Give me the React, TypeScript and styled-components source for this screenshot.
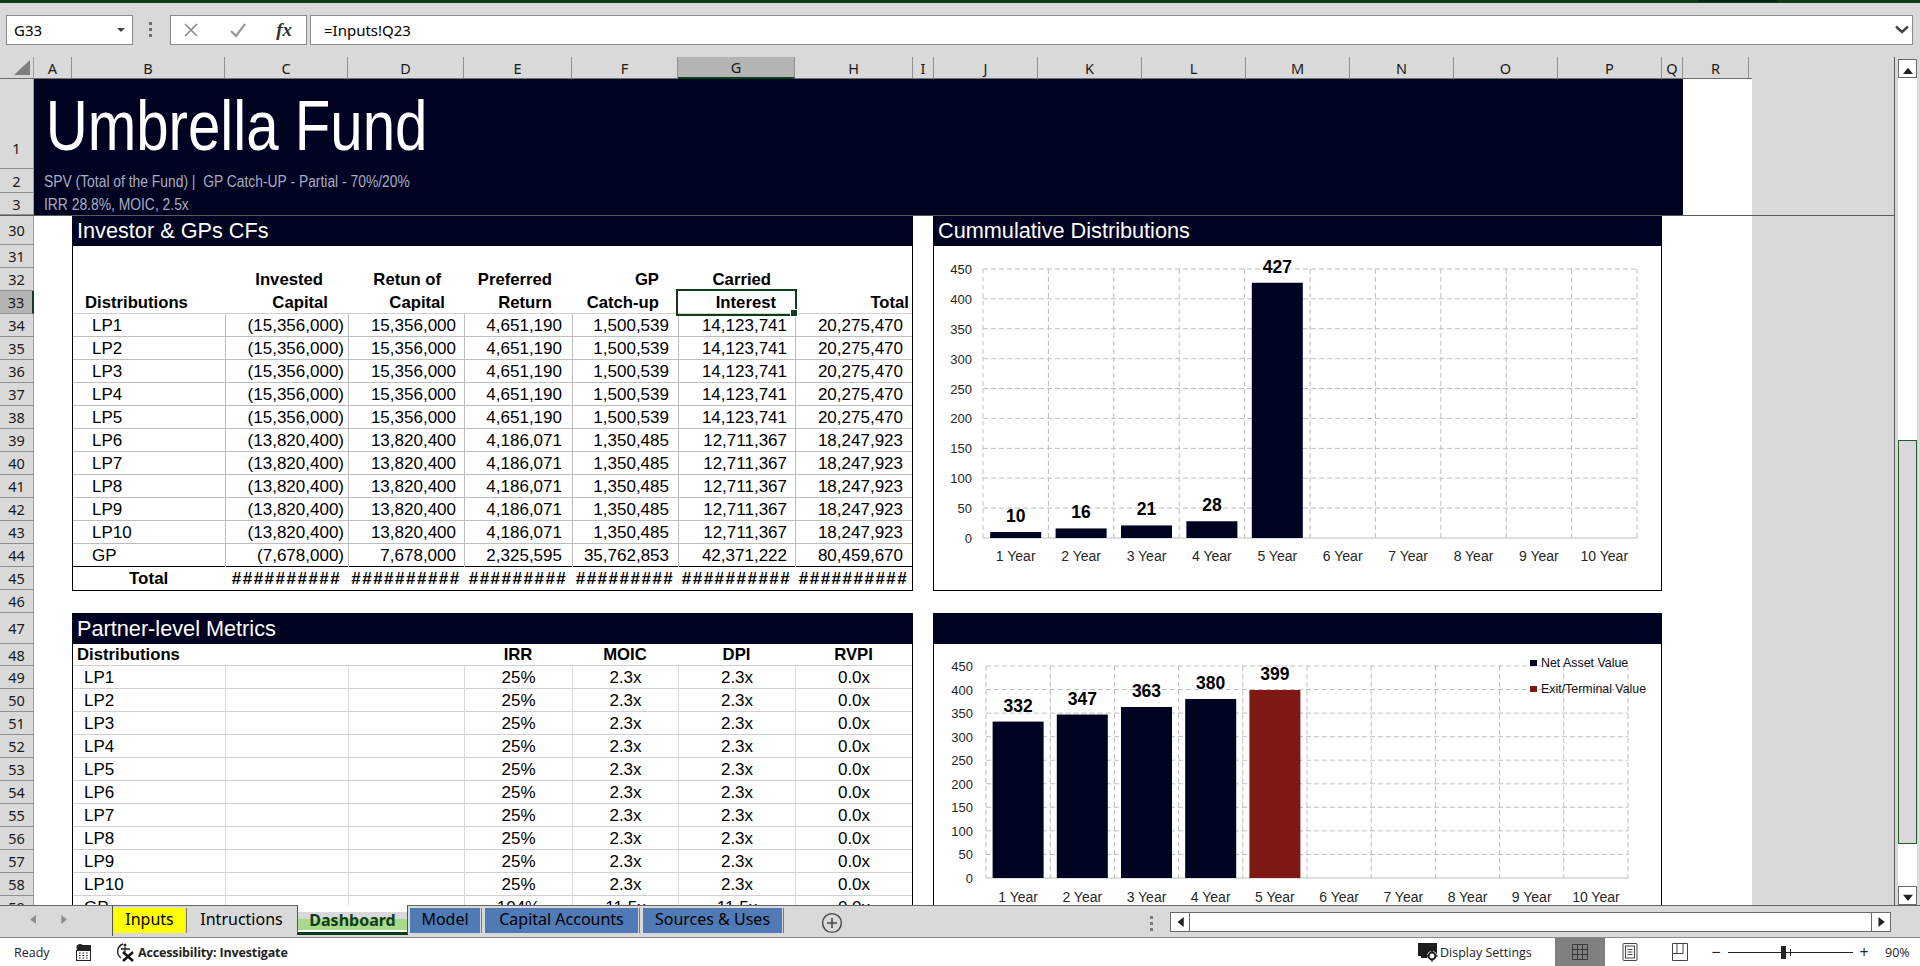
import React from "react";
import styled, { createGlobalStyle } from "styled-components";

const NAVY = "#000222";
const RED = "#7f1715";
const GREEN = "#0f3d1a";
const CHROME = "#d9d9d9";
const SELECTED = "#b4b4b4";

const GlobalStyle = createGlobalStyle`
  html, body {
    margin: 0;
    padding: 0;
    width: 1920px;
    height: 966px;
    overflow: hidden;
    background: ${CHROME};
  }

  * {
    box-sizing: border-box;
  }
`;

const columns = [
  { name: "A", width: 38 },
  { name: "B", width: 153 },
  { name: "C", width: 123 },
  { name: "D", width: 116 },
  { name: "E", width: 108 },
  { name: "F", width: 106 },
  { name: "G", width: 117 },
  { name: "H", width: 118 },
  { name: "I", width: 21 },
  { name: "J", width: 104 },
  { name: "K", width: 104 },
  { name: "L", width: 104 },
  { name: "M", width: 104 },
  { name: "N", width: 104 },
  { name: "O", width: 104 },
  { name: "P", width: 104 },
  { name: "Q", width: 21 },
  { name: "R", width: 66 },
];

const scrollRows = [
  [30, 29],
  [31, 23],
  [32, 23],
  [33, 23],
  ...Array.from({ length: 12 }, (_, i) => [34 + i, 23]),
  [46, 23],
  [47, 31],
  [48, 22],
  ...Array.from({ length: 11 }, (_, i) => [49 + i, 23]),
];

const big = ["(15,356,000)", "15,356,000", "4,651,190", "1,500,539", "14,123,741", "20,275,470"];
const small = ["(13,820,400)", "13,820,400", "4,186,071", "1,350,485", "12,711,367", "18,247,923"];

const flows = [
  { name: "LP1", values: big },
  { name: "LP2", values: big },
  { name: "LP3", values: big },
  { name: "LP4", values: big },
  { name: "LP5", values: big },
  { name: "LP6", values: small },
  { name: "LP7", values: small },
  { name: "LP8", values: small },
  { name: "LP9", values: small },
  { name: "LP10", values: small },
  { name: "GP", values: ["(7,678,000)", "7,678,000", "2,325,595", "35,762,853", "42,371,222", "80,459,670"] },
];

const numberPads = [4, 8, 10, 9, 8, 9];
const hashes = ["##########", "##########", "#########", "#########", "##########", "##########"];

const metrics = [
  ...["LP1", "LP2", "LP3", "LP4", "LP5", "LP6", "LP7", "LP8", "LP9", "LP10"].map((name) => ({
    name,
    values: ["25%", "2.3x", "2.3x", "0.0x"],
  })),
  { name: "GP", values: ["104%", "11.5x", "11.5x", "0.0x"] },
];

const years = ["1 Year", "2 Year", "3 Year", "4 Year", "5 Year", "6 Year", "7 Year", "8 Year", "9 Year", "10 Year"];
const ticks = [0, 50, 100, 150, 200, 250, 300, 350, 400, 450];

function Triangle({ dir, size = 8, color = "#222" }: { dir: "up" | "down" | "left" | "right"; size?: number; color?: string }) {
  const points = {
    up: "0,8 8,8 4,3",
    down: "0,3 8,3 4,8",
    left: "7,0 7,8 2,4",
    right: "2,0 2,8 7,4",
  }[dir];
  return (
    <svg width={size} height={size} viewBox="0 0 8 8">
      <polygon points={points} fill={color} />
    </svg>
  );
}

interface BarDatum {
  value: number;
  color: string;
}

interface ChartProps {
  width: number;
  height: number;
  left: number;
  right: number;
  top: number;
  bottom: number;
  axisX: number;
  labelY: number;
  bars: BarDatum[];
  children?: React.ReactNode;
}

function BarChart({ width, height, left, right, top, bottom, axisX, labelY, bars, children }: ChartProps) {
  const step = (right - left) / 10;
  const scale = (bottom - top) / 450;
  const barWidth = 51;

  return (
    <svg width={width} height={height} viewBox={`0 0 ${width} ${height}`}>
      {ticks.map((tick) => (
        <GridLine
          key={tick}
          x1={left}
          x2={right}
          y1={bottom - tick * scale}
          y2={bottom - tick * scale}
          strokeDasharray={tick === 0 ? undefined : "5 3"}
        />
      ))}
      {years.concat("").map((_, i) => (
        <GridLine key={i} x1={left + i * step} x2={left + i * step} y1={top} y2={bottom} strokeDasharray="5 3" />
      ))}
      {ticks.map((tick) => (
        <AxisText key={tick} x={axisX} y={bottom - tick * scale + 5} textAnchor="end">
          {tick}
        </AxisText>
      ))}
      {bars.map((bar, i) => {
        const barTop = bottom - bar.value * scale;
        const x = left + i * step + (step - barWidth) / 2;
        return (
          <g key={i}>
            <rect x={x} y={barTop} width={barWidth} height={bar.value * scale} fill={bar.color} />
            <ValueText x={x + barWidth / 2} y={barTop - 10} textAnchor="middle">
              {bar.value}
            </ValueText>
          </g>
        );
      })}
      {years.map((year, i) => (
        <YearText key={year} x={left + i * step + step / 2} y={labelY} textAnchor="middle">
          {year}
        </YearText>
      ))}
      {children}
    </svg>
  );
}

function App() {
  return (
    <Page>
      <GlobalStyle />
      <TitleStrip>
        <TitleStripTab />
      </TitleStrip>

      <FormulaBar>
        <NameBox>
          G33
          <svg width="8" height="8" viewBox="0 0 8 8">
            <polygon points="0,2 8,2 4,6" fill="#444" />
          </svg>
        </NameBox>
        <GripDots>
          <i />
          <i />
          <i />
        </GripDots>
        <FormulaButtons>
          <svg width="18" height="18" viewBox="0 0 18 18">
            <path d="M3 3 L15 15 M15 3 L3 15" stroke="#8a8a8a" strokeWidth="1.6" fill="none" />
          </svg>
          <svg width="18" height="18" viewBox="0 0 18 18">
            <path d="M2 10 L7 15 L16 3" stroke="#9a9a9a" strokeWidth="2.2" fill="none" />
          </svg>
          <FxLabel>fx</FxLabel>
        </FormulaButtons>
        <FormulaInput>
          =Inputs!Q23
          <svg width="14" height="10" viewBox="0 0 14 10">
            <path d="M1 1.5 L7 7 L13 1.5" stroke="#444" strokeWidth="2.4" fill="none" />
          </svg>
        </FormulaInput>
      </FormulaBar>

      <Workspace>
        <GridArea>
          <ColumnBar>
            <Corner>
              <svg width="16" height="15" viewBox="0 0 16 15">
                <polygon points="16,0 16,15 0,15" fill="#7f7f7f" />
              </svg>
            </Corner>
            {columns.map((col) => (
              <ColumnHead key={col.name} $width={col.width} $selected={col.name === "G"}>
                {col.name}
              </ColumnHead>
            ))}
            <ColumnEnd />
          </ColumnBar>

          <FrozenPane>
            <RowHeads>
              <RowHead $height={90} $bottom>1</RowHead>
              <RowHead $height={24}>2</RowHead>
              <RowHead $height={22}>3</RowHead>
            </RowHeads>
            <Banner>
              <BannerTitle>Umbrella Fund</BannerTitle>
              <BannerLine $height={24}>SPV (Total of the Fund) |&nbsp; GP Catch-UP - Partial - 70%/20%</BannerLine>
              <BannerLine $height={22}>IRR 28.8%, MOIC, 2.5x</BannerLine>
            </Banner>
            <BlankCell />
          </FrozenPane>

          <ScrollPane>
            <RowHeads>
              {scrollRows.map(([row, height]) => (
                <RowHead key={row} $height={height} $selected={row === 33}>
                  {row}
                </RowHead>
              ))}
            </RowHeads>
            <SheetBody>
              <LeftColumn>
                <Panel>
                  <PanelTitle $height={30}>Investor &amp; GPs CFs</PanelTitle>
                  <BlankRow />
                  <HeadRow>
                    <Cell />
                    <HeadCell $pad={25}>Invested</HeadCell>
                    <HeadCell $pad={23}>Retun of</HeadCell>
                    <HeadCell $pad={20}>Preferred</HeadCell>
                    <HeadCell $pad={19}>GP</HeadCell>
                    <HeadCell $pad={24}>Carried</HeadCell>
                    <HeadCell />
                  </HeadRow>
                  <HeadRow $ruled>
                    <HeadCell $left $pad={12}>Distributions</HeadCell>
                    <HeadCell $pad={20}>Capital</HeadCell>
                    <HeadCell $pad={19}>Capital</HeadCell>
                    <HeadCell $pad={20}>Return</HeadCell>
                    <HeadCell $pad={19}>Catch-up</HeadCell>
                    <HeadCell $pad={19}>
                      Interest
                      <CellCursor />
                    </HeadCell>
                    <HeadCell $pad={3}>Total</HeadCell>
                  </HeadRow>
                  {flows.map((flow) => (
                    <DataRow key={flow.name}>
                      <NameCell $indent={19}>{flow.name}</NameCell>
                      {flow.values.map((value, i) => (
                        <NumberCell key={i} $pad={numberPads[i]}>
                          {value}
                        </NumberCell>
                      ))}
                    </DataRow>
                  ))}
                  <TotalRow>
                    <TotalLabel>Total</TotalLabel>
                    {hashes.map((hash, i) => (
                      <HashCell key={i}>{hash}</HashCell>
                    ))}
                  </TotalRow>
                </Panel>

                <OpenPanel>
                  <PanelTitle $height={31}>Partner-level Metrics</PanelTitle>
                  <MetricHead>
                    <HeadCell $left $pad={4}>Distributions</HeadCell>
                    <Cell />
                    <Cell />
                    <MetricTitle>IRR</MetricTitle>
                    <MetricTitle>MOIC</MetricTitle>
                    <MetricTitle>DPI</MetricTitle>
                    <MetricTitle>RVPI</MetricTitle>
                  </MetricHead>
                  {metrics.map((metric) => (
                    <MetricRow key={metric.name}>
                      <NameCell $indent={11}>{metric.name}</NameCell>
                      <MetricCell />
                      <MetricCell />
                      {metric.values.map((value, i) => (
                        <MetricCell key={i}>{value}</MetricCell>
                      ))}
                    </MetricRow>
                  ))}
                </OpenPanel>
              </LeftColumn>

              <RightColumn>
                <Panel>
                  <PanelTitle $height={30}>Cummulative Distributions</PanelTitle>
                  <BarChart
                    width={727}
                    height={344}
                    left={49}
                    right={703}
                    top={23}
                    bottom={292}
                    axisX={38}
                    labelY={315}
                    bars={[10, 16, 21, 28, 427].map((value) => ({ value, color: NAVY }))}
                  />
                </Panel>

                <OpenPanel>
                  <PanelTitle $height={31} />
                  <BarChart
                    width={727}
                    height={261}
                    left={52}
                    right={694}
                    top={22}
                    bottom={234}
                    axisX={39}
                    labelY={258}
                    bars={[
                      { value: 332, color: NAVY },
                      { value: 347, color: NAVY },
                      { value: 363, color: NAVY },
                      { value: 380, color: NAVY },
                      { value: 399, color: RED },
                    ]}
                  >
                    <rect x="596" y="16" width="7" height="6" fill={NAVY} />
                    <LegendText x="607" y="23">Net Asset Value</LegendText>
                    <rect x="596" y="42" width="7" height="6" fill={RED} />
                    <LegendText x="607" y="49">Exit/Terminal Value</LegendText>
                  </BarChart>
                </OpenPanel>
              </RightColumn>
            </SheetBody>
          </ScrollPane>
        </GridArea>

        <VerticalScroll>
          <ScrollButton>
            <Triangle dir="up" size={10} />
          </ScrollButton>
          <ScrollTrack>
            <ScrollThumb />
          </ScrollTrack>
          <ScrollButton>
            <Triangle dir="down" size={10} />
          </ScrollButton>
        </VerticalScroll>
      </Workspace>

      <TabBar>
        <TabNav>
          <Triangle dir="left" size={9} color="#8c8c8c" />
          <Triangle dir="right" size={9} color="#8c8c8c" />
        </TabNav>
        <Tabs>
          <Tab $width={71} $fill="#ffff00" $gap={2}>Inputs</Tab>
          <Tab $width={109} $gap={1} $plain>Intructions</Tab>
          <ActiveTab>Dashboard</ActiveTab>
          <Tab $width={70} $fill="#4f7ab5">Model</Tab>
          <Tab $width={153} $fill="#4f7ab5">Capital Accounts</Tab>
          <Tab $width={139} $fill="#4f7ab5">Sources &amp; Uses</Tab>
        </Tabs>
        <AddSheet>
          <svg width="22" height="22" viewBox="0 0 22 22">
            <circle cx="11" cy="11" r="9.4" stroke="#444" strokeWidth="1.4" fill="none" />
            <path d="M11 6 V16 M6 11 H16" stroke="#444" strokeWidth="1.5" />
          </svg>
        </AddSheet>
        <TabGrip>
          <i />
          <i />
          <i />
        </TabGrip>
        <HorizontalScroll>
          <HScrollButton>
            <Triangle dir="left" size={10} />
          </HScrollButton>
          <HScrollTrack />
          <HScrollButton>
            <Triangle dir="right" size={10} />
          </HScrollButton>
        </HorizontalScroll>
      </TabBar>

      <StatusBar>
        <StatusText>Ready</StatusText>
        <StatusIcon $left={19}>
          <svg width="15" height="17" viewBox="0 0 15 17">
            <circle cx="4" cy="3.5" r="3.5" fill="#222" />
            <rect x="3" y="1" width="12" height="5" fill="#222" />
            <rect x="0.5" y="6.5" width="14" height="10" fill="#fff" stroke="#222" />
            <path d="M3 9h1.6M6.5 9h1.6M10 9h1.6M3 11.5h1.6M6.5 11.5h1.6M10 11.5h1.6M3 14h1.6M6.5 14h1.6M10 14h1.6" stroke="#222" />
          </svg>
        </StatusIcon>
        <StatusIcon $left={24}>
          <svg width="22" height="20" viewBox="0 0 22 20">
            <path d="M8 2 A8 8 0 0 0 6 16" stroke="#222" strokeWidth="1.4" fill="none" />
            <circle cx="10" cy="3" r="1.5" fill="#222" />
            <path d="M6 7 H15 M10 5 V10" stroke="#222" strokeWidth="1.3" fill="none" />
            <path d="M8 10 L18 19 M18 10 L8 19" stroke="#111" strokeWidth="2.4" fill="none" />
          </svg>
        </StatusIcon>
        <AccessText>Accessibility: Investigate</AccessText>
        <StatusSpacer />
        <svg width="20" height="19" viewBox="0 0 20 19">
          <rect x="0" y="0" width="19" height="13" fill="#1c1c1c" />
          <rect x="3" y="13" width="7" height="2" fill="#1c1c1c" />
          <circle cx="14" cy="13" r="5" fill="#fff" />
          <circle cx="14" cy="13" r="3.4" fill="none" stroke="#1c1c1c" strokeWidth="2" />
          <path d="M14 7.5V9.5M14 16.5V18.5M8.5 13H10.500M17.500 13H19.500" stroke="#1c1c1c" strokeWidth="1.5" />
        </svg>
        <DisplayText>Display Settings</DisplayText>
        <ViewButton $active>
          <svg width="16" height="16" viewBox="0 0 16 16">
            <path d="M0.5 0.5H15.500V15.500H0.500ZM5.500 0.500V15.500M10.500 0.500V15.500M0.500 5.500H15.500M0.500 10.500H15.500" stroke="#3a3a3a" fill="none" />
          </svg>
        </ViewButton>
        <ViewButton>
          <svg width="16" height="18" viewBox="0 0 16 18">
            <rect x="1" y="0.5" width="14" height="17" rx="1" fill="none" stroke="#444" />
            <rect x="3.500" y="3" width="9" height="12" fill="none" stroke="#444" />
            <path d="M5.500 6.500H10.500M5.500 9H10.500M5.500 11.500H10.500" stroke="#444" />
          </svg>
        </ViewButton>
        <ViewButton>
          <svg width="16" height="18" viewBox="0 0 16 18">
            <path d="M0.500 0.500H15.500V17.500H0.500ZM0.500 10.500H11V0.500M5 0.500V10.500" stroke="#444" fill="none" />
          </svg>
        </ViewButton>
        <ZoomControl>
          <ZoomSign>−</ZoomSign>
          <ZoomSlider>
            <ZoomTick />
            <ZoomThumb />
          </ZoomSlider>
          <ZoomSign>+</ZoomSign>
        </ZoomControl>
        <ZoomValue>90%</ZoomValue>
      </StatusBar>
    </Page>
  );
}

const Page = styled.div`
  display: flex;
  flex-direction: column;
  width: 1920px;
  height: 966px;
  overflow: hidden;
  background: ${CHROME};
  font-family: "Liberation Sans", Arial, sans-serif;
  color: #000;
`;

const TitleStrip = styled.div`
  display: flex;
  justify-content: flex-end;
  height: 3px;
  padding-right: 143px;
  background: ${GREEN};
`;

const TitleStripTab = styled.div`
  width: 79px;
  height: 2px;
  border-radius: 0 0 3px 3px;
  background: #082410;
`;

const FormulaBar = styled.div`
  display: flex;
  align-items: flex-start;
  height: 54px;
  padding: 12px 7px 0 6px;
`;

const NameBox = styled.div`
  display: flex;
  align-items: center;
  justify-content: space-between;
  width: 127px;
  height: 30px;
  padding: 0 7px;
  border: 1px solid #8a8a8a;
  background: #fff;
  font-family: "Noto Sans", sans-serif;
  font-size: 15px;
`;

const GripDots = styled.div`
  display: flex;
  flex-direction: column;
  gap: 3px;
  width: 37px;
  height: 30px;
  padding: 7px 0 0 16px;

  i {
    width: 3px;
    height: 3px;
    background: #6e6e6e;
  }
`;

const FormulaButtons = styled.div`
  display: flex;
  align-items: center;
  justify-content: space-between;
  width: 137px;
  height: 30px;
  margin-right: 3px;
  padding: 0 14px 0 11px;
  border: 1px solid #8a8a8a;
  background: #fff;
`;

const FxLabel = styled.span`
  font-family: "Liberation Serif", serif;
  font-size: 19px;
  font-style: italic;
  font-weight: bold;
  color: #333;
`;

const FormulaInput = styled.div`
  display: flex;
  align-items: center;
  justify-content: space-between;
  flex: 1;
  height: 30px;
  padding: 0 3px 0 13px;
  border: 1px solid #8a8a8a;
  background: #fff;
  font-family: "Noto Sans", sans-serif;
  font-size: 15px;
`;

const Workspace = styled.div`
  display: flex;
  height: 848px;
`;

const GridArea = styled.div`
  display: flex;
  flex-direction: column;
  width: 1895px;
  border-right: 1px solid #5a5a5a;
`;

const ColumnBar = styled.div`
  display: flex;
  height: 22px;
  flex: none;
`;

const Corner = styled.div`
  display: flex;
  align-items: flex-end;
  justify-content: flex-end;
  width: 34px;
  padding: 0 3px 3px 0;
  border-bottom: 1px solid #6e6e6e;
  border-right: 1px solid #a0a0a0;
`;

const ColumnHead = styled.div<{ $width: number; $selected?: boolean }>`
  display: flex;
  align-items: center;
  justify-content: center;
  width: ${(p) => p.$width}px;
  border-right: 1px solid #8f8f8f;
  border-bottom: ${(p) => (p.$selected ? `2px solid ${GREEN}` : "1px solid #6e6e6e")};
  background: ${(p) => (p.$selected ? SELECTED : "transparent")};
  font-family: "Noto Sans", sans-serif;
  font-size: 14.5px;
  color: #1a1a1a;
`;

const ColumnEnd = styled.div`
  width: 3px;
  border-bottom: 1px solid #6e6e6e;
`;

const FrozenPane = styled.div`
  display: flex;
  flex: none;
  height: 137px;
  border-bottom: 1px solid #5a5a5a;
`;

const RowHeads = styled.div`
  display: flex;
  flex-direction: column;
  flex: none;
  width: 34px;
`;

const RowHead = styled.div<{ $height: number; $bottom?: boolean; $selected?: boolean }>`
  display: flex;
  flex: none;
  align-items: ${(p) => (p.$bottom ? "flex-end" : "center")};
  justify-content: center;
  height: ${(p) => p.$height}px;
  padding-bottom: ${(p) => (p.$bottom ? "10px" : "0")};
  border-bottom: 1px solid #8f8f8f;
  border-right: ${(p) => (p.$selected ? `2px solid ${GREEN}` : "1px solid #a0a0a0")};
  background: ${(p) => (p.$selected ? SELECTED : "transparent")};
  font-family: "Noto Sans", sans-serif;
  font-size: 14.5px;
  color: #1a1a1a;
`;

const Banner = styled.div`
  display: flex;
  flex-direction: column;
  width: 1649px;
  padding-left: 10px;
  background: ${NAVY};
  color: #a9acc0;
`;

const BannerTitle = styled.div`
  height: 90px;
  padding: 7px 0 0 2px;
  font-size: 71px;
  line-height: 80px;
  color: #fff;
  transform: scaleX(0.82);
  transform-origin: left;
`;

const BannerLine = styled.div<{ $height: number }>`
  height: ${(p) => p.$height}px;
  font-size: 16px;
  line-height: ${(p) => p.$height + 2}px;
  white-space: nowrap;
  transform: scaleX(0.866);
  transform-origin: left;
`;

const BlankCell = styled.div`
  width: 69px;
  background: #fff;
`;

const ScrollPane = styled.div`
  display: flex;
  flex: 1;
  min-height: 0;
  overflow: hidden;
`;

const SheetBody = styled.div`
  display: flex;
  gap: 20px;
  width: 1718px;
  height: 689px;
  padding-left: 38px;
  overflow: hidden;
  background: #fff;
`;

const LeftColumn = styled.div`
  display: flex;
  flex-direction: column;
  flex: none;
  gap: 22px;
  width: 841px;
`;

const RightColumn = styled.div`
  display: flex;
  flex-direction: column;
  flex: none;
  gap: 22px;
  width: 729px;
`;

const Panel = styled.section`
  flex: none;
  height: 375px;
  border: 1px solid #000;
  border-top: 0;
  background: #fff;

  svg {
    display: block;
  }
`;

const OpenPanel = styled(Panel)`
  height: 300px;
  border-bottom: 0;
`;

const PanelTitle = styled.h2<{ $height: number }>`
  height: ${(p) => p.$height}px;
  margin: 0 -1px;
  padding-left: 5px;
  background: ${NAVY};
  font-size: 21.7px;
  font-weight: normal;
  line-height: ${(p) => p.$height}px;
  color: #fff;
`;

const BlankRow = styled.div`
  height: 22px;
`;

const tableColumns = "152px 123px 116px 108px 106px 117px 117px";

const HeadRow = styled.div<{ $ruled?: boolean }>`
  display: grid;
  grid-template-columns: ${tableColumns};
  height: 23px;
  border-bottom: ${(p) => (p.$ruled ? "1px solid #d0d0d0" : "0")};
`;

const Cell = styled.div`
  min-width: 0;
`;

const HeadCell = styled.div<{ $pad?: number; $left?: boolean }>`
  position: relative;
  padding: ${(p) => (p.$left ? `0 0 0 ${p.$pad}px` : `0 ${p.$pad ?? 0}px 0 0`)};
  font-size: 16.7px;
  font-weight: bold;
  line-height: 23px;
  text-align: ${(p) => (p.$left ? "left" : "right")};
  white-space: nowrap;
`;

const CellCursor = styled.div`
  position: absolute;
  top: -2px;
  left: -2px;
  right: -2px;
  bottom: -2px;
  border: 2px solid ${GREEN};

  &::after {
    content: "";
    position: absolute;
    right: -3px;
    bottom: -3px;
    width: 6px;
    height: 6px;
    border: 1px solid #fff;
    background: ${GREEN};
  }
`;

const DataRow = styled.div`
  display: grid;
  grid-template-columns: ${tableColumns};
  height: 23px;
  border-bottom: 1px solid #bdbdbd;
  font-size: 17px;
  line-height: 23px;

  &:nth-last-child(2) {
    border-bottom-color: #000;
  }
`;

const NameCell = styled.div<{ $indent: number }>`
  padding-left: ${(p) => p.$indent}px;
`;

const NumberCell = styled.div<{ $pad: number }>`
  padding-right: ${(p) => p.$pad}px;
  border-left: 1px solid #bdbdbd;
  text-align: right;
  white-space: nowrap;
`;

const TotalRow = styled.div`
  display: grid;
  grid-template-columns: ${tableColumns};
  height: 23px;
  font-size: 17px;
  font-weight: bold;
  line-height: 23px;
`;

const TotalLabel = styled.div`
  padding-left: 56px;
`;

const HashCell = styled.div`
  overflow: hidden;
  letter-spacing: 1.5px;
  text-align: center;
  white-space: nowrap;
`;

const MetricHead = styled.div`
  display: grid;
  grid-template-columns: ${tableColumns};
  height: 22px;
  border-bottom: 1px solid #d0d0d0;

  ${HeadCell} {
    line-height: 21px;
  }
`;

const MetricTitle = styled.div`
  font-size: 16.7px;
  font-weight: bold;
  line-height: 21px;
  text-align: center;
`;

const MetricRow = styled.div`
  display: grid;
  grid-template-columns: ${tableColumns};
  height: 23px;
  border-bottom: 1px solid #d0d0d0;
  font-size: 17px;
  line-height: 23px;
`;

const MetricCell = styled.div`
  border-left: 1px solid #d9d9d9;
  text-align: center;
`;

const GridLine = styled.line`
  stroke: #bfbfbf;
  stroke-width: 1;
`;

const AxisText = styled.text`
  font-family: "Liberation Sans", sans-serif;
  font-size: 13px;
  fill: #262626;
`;

const ValueText = styled.text`
  font-family: "Liberation Sans", sans-serif;
  font-size: 17.5px;
  font-weight: bold;
  fill: #000;
`;

const YearText = styled.text`
  font-family: "Liberation Sans", sans-serif;
  font-size: 14px;
  fill: #262626;
`;

const LegendText = styled.text`
  font-family: "Liberation Sans", sans-serif;
  font-size: 12.4px;
  fill: #111;
`;

const VerticalScroll = styled.div`
  display: flex;
  flex-direction: column;
  width: 25px;
  padding: 2px 3px 0 3px;
`;

const ScrollButton = styled.div`
  display: flex;
  flex: none;
  align-items: center;
  justify-content: center;
  height: 19px;
  border: 1px solid #6a6a6a;
  background: #fff;
`;

const ScrollTrack = styled.div`
  flex: 1;
  padding-top: 362px;
  background: #fff;
`;

const ScrollThumb = styled.div`
  height: 404px;
  border: 1px solid #1e5c2a;
  background: ${CHROME};
`;

const TabBar = styled.div`
  position: relative;
  display: flex;
  align-items: flex-start;
  height: 33px;
  border-top: 1px solid #666;
  border-bottom: 1px solid #8a8a8a;
`;

const TabNav = styled.div`
  display: flex;
  gap: 22px;
  width: 112px;
  height: 27px;
  padding: 9px 0 0 28px;
  align-items: flex-start;
`;

const Tabs = styled.div`
  display: flex;
  height: 30px;
  padding-top: 2px;
  padding-left: 1px;
  border-left: 1px solid #555;
  font-family: "Noto Sans", sans-serif;
  font-size: 16px;
`;

const Tab = styled.div<{ $width: number; $fill?: string; $gap?: number; $plain?: boolean }>`
  position: relative;
  width: ${(p) => p.$width}px;
  height: 25px;
  margin-right: ${(p) => p.$gap ?? 5}px;
  background: ${(p) => p.$fill ?? "transparent"};
  line-height: 23px;
  text-align: center;

  &::after {
    content: "";
    display: ${(p) => (p.$plain ? "none" : "block")};
    position: absolute;
    top: 0;
    right: -2px;
    width: 1px;
    height: 25px;
    background: #777;
  }
`;

const ActiveTab = styled.div`
  position: relative;
  width: 111px;
  height: 30px;
  margin: -3px 2px 0 0;
  border-left: 1px solid #555;
  border-right: 1px solid #555;
  border-bottom: 3px solid ${GREEN};
  background: linear-gradient(
    #fff 0 7px,
    ${CHROME} 7px 14px,
    #a9d98d 14px 25px,
    #fff 25px
  );
  font-size: 16px;
  font-weight: bold;
  line-height: 30px;
  text-align: center;
  color: ${GREEN};
`;

const AddSheet = styled.div`
  position: absolute;
  left: 821px;
  top: 6px;
  height: 22px;
`;

const TabGrip = styled.div`
  position: absolute;
  left: 1150px;
  top: 10px;
  display: flex;
  flex-direction: column;
  gap: 3px;

  i {
    width: 3px;
    height: 3px;
    background: #7a7a7a;
  }
`;

const HorizontalScroll = styled.div`
  position: absolute;
  left: 1170px;
  top: 6px;
  display: flex;
  width: 721px;
  height: 20px;
`;

const HScrollButton = styled.div`
  display: flex;
  align-items: center;
  justify-content: center;
  width: 20px;
  border: 1px solid #6a6a6a;
  background: #fff;
`;

const HScrollTrack = styled.div`
  flex: 1;
  border-top: 1px solid #6a6a6a;
  border-bottom: 1px solid #6a6a6a;
  background: #fff;
`;

const StatusBar = styled.footer`
  display: flex;
  align-items: center;
  height: 28px;
  padding: 0 10px 0 14px;
  background: #fff;
  font-family: "Open Sans", sans-serif;
  font-size: 12.5px;
  color: #222;
`;

const StatusText = styled.span`
  width: 43px;
`;

const StatusIcon = styled.span<{ $left: number }>`
  display: flex;
  margin-left: ${(p) => p.$left}px;
`;

const AccessText = styled.span`
  margin-left: 1px;
  font-size: 12.5px;
  font-weight: bold;
  letter-spacing: -0.15px;
`;

const StatusSpacer = styled.span`
  flex: 1;
`;

const DisplayText = styled.span`
  width: 115px;
  margin-left: 2px;
`;

const ViewButton = styled.div<{ $active?: boolean }>`
  display: flex;
  align-items: center;
  justify-content: center;
  width: 50px;
  height: 28px;
  background: ${(p) => (p.$active ? "#808080" : "transparent")};
`;

const ZoomControl = styled.div`
  display: flex;
  align-items: center;
  gap: 6px;
  margin-left: 6px;
`;

const ZoomSign = styled.span`
  width: 10px;
  font-size: 16px;
  text-align: center;
`;

const ZoomSlider = styled.div`
  position: relative;
  width: 125px;
  height: 1px;
  margin-left: 1px;
  background: #222;
`;

const ZoomThumb = styled.div`
  position: absolute;
  left: 53px;
  top: -6px;
  width: 5px;
  height: 13px;
  background: #222;
`;

const ZoomTick = styled.div`
  position: absolute;
  left: 62px;
  top: -3px;
  width: 1px;
  height: 7px;
  background: #222;
`;

const ZoomValue = styled.span`
  width: 25px;
  margin-left: 16px;
  white-space: nowrap;
`;

export default App;
